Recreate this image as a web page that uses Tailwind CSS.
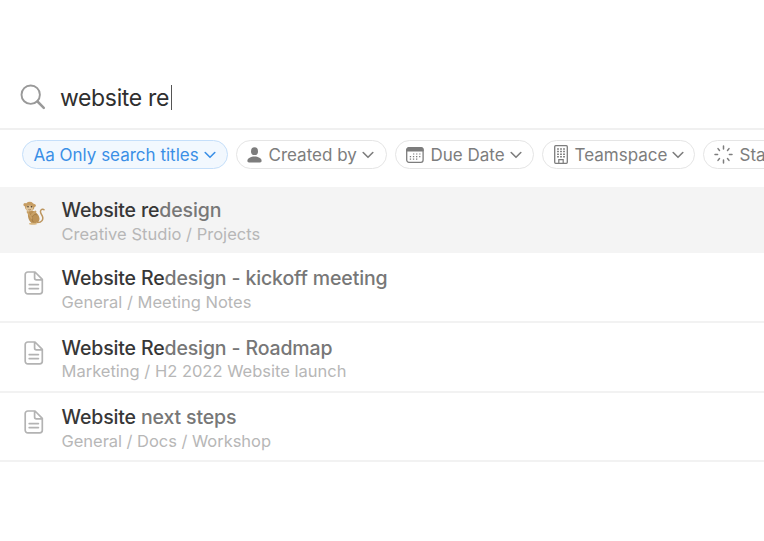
<!DOCTYPE html>
<html lang="en">
<head>
    <meta charset="UTF-8">
    <meta name="viewport" content="width=device-width, initial-scale=1.0">
    <title>Search</title>
    <script src="https://cdn.jsdelivr.net/npm/@tailwindcss/browser@4"></script>
</head>
<body class="h-screen overflow-hidden bg-white pt-[66px] font-['Inter',sans-serif] text-[#777]">
    <!-- Shared icons -->
    <svg class="hidden">
        <symbol id="chevron" viewBox="0 0 12 8">
            <path d="M1.2 1.5 6 6.3l4.8-4.8" fill="none" stroke="currentColor" stroke-width="1.6" stroke-linecap="round" stroke-linejoin="round"/>
        </symbol>
        <symbol id="page" viewBox="0 0 20 24">
            <path d="M3.8 1H11l7.3 7.3v11.9a2.6 2.6 0 0 1-2.6 2.6H3.8a2.6 2.6 0 0 1-2.6-2.6V3.6A2.6 2.6 0 0 1 3.8 1ZM10.6 1.2v5.9a1.8 1.8 0 0 0 1.8 1.8h5.7M5.2 13.6h9.2M5.2 17.6h9.2" fill="none" stroke="currentColor" stroke-width="1.7" stroke-linecap="round" stroke-linejoin="round"/>
        </symbol>
    </svg>

    <!-- Search field -->
    <div class="flex h-[63.5px] items-center border-b-2 border-[#f0f0f0] pl-5">
        <svg class="size-[26px] text-[#999]" viewBox="0 0 26 26" fill="none" stroke="currentColor">
            <circle cx="10.7" cy="10.7" r="9.2" stroke-width="1.9"/>
            <path d="m17.5 17.5 6.3 6.3" stroke-width="2.5" stroke-linecap="round"/>
        </svg>
        <span class="mt-0.5 ml-3.5 text-[23px] tracking-[-0.35px] whitespace-nowrap text-[#2f2f2f]">website re</span>
        <span class="mt-0.5 ml-[2px] h-[25px] w-px bg-[#555]"></span>
    </div>

    <!-- Filters -->
    <div class="flex h-[57.5px] items-start gap-2 overflow-hidden pt-[10px] pl-[21.5px] text-[17px] whitespace-nowrap text-[#7d7d7d]">
        <div class="flex h-[29px] w-[206px] shrink-0 items-center rounded-full border-[1.5px] border-[#c5dffa] bg-[#f2f8fe] pl-[11px] text-[#3a8fe6]">
            <span class="pt-[3px]">Aa Only search titles</span>
            <svg class="mt-0.5 ml-[5px] h-2 w-3"><use href="#chevron"/></svg>
        </div>
        <div class="flex h-[29px] w-[151px] shrink-0 items-center rounded-full border-[1.5px] border-[#e5e5e5] pl-2.5">
            <svg class="mt-px h-4 w-[15px]" viewBox="0 0 15 16" fill="currentColor">
                <ellipse cx="7.5" cy="4.2" rx="3.5" ry="3.9"/>
                <path d="M.4 13.7C.4 11 4 9.4 7.5 9.4s7.1 1.6 7.1 4.3c0 1.2-.5 1.7-1.6 1.7H2C.9 15.4.4 14.9.4 13.7Z"/>
            </svg>
            <span class="ml-[7px] pt-[3px]">Created by</span>
            <svg class="mt-0.5 ml-[5px] h-2 w-3"><use href="#chevron"/></svg>
        </div>
        <div class="flex h-[29px] w-[139px] shrink-0 items-center rounded-full border-[1.5px] border-[#e5e5e5] pl-2.5">
            <svg class="mt-px h-4 w-[18px]" viewBox="0 0 18 16" fill="none" stroke="currentColor">
                <rect x=".7" y=".7" width="16.4" height="14.6" rx="2.2" stroke-width="1.3"/>
                <path d="M.7 2.8A2.1 2.1 0 0 1 2.8.7H15a2.1 2.1 0 0 1 2.1 2.1V4H.7Z" fill="currentColor"/>
                <path d="M7 7h7.5M3.8 9.6h10.7M3.8 12.2h7.7" stroke-width="1.2" stroke-dasharray="1.3 1.8"/>
            </svg>
            <span class="ml-[7px] pt-[3px]">Due Date</span>
            <svg class="mt-0.5 ml-[5px] h-2 w-3"><use href="#chevron"/></svg>
        </div>
        <div class="flex h-[29px] w-[153px] shrink-0 items-center rounded-full border-[1.5px] border-[#e5e5e5] pl-[11px]">
            <svg class="h-[19px] w-3.5" viewBox="0 0 14 19" fill="none" stroke="currentColor">
                <path d="M1.7.7h10.6q1 0 1 1v15.6q0 1-1 1H1.7q-1 0-1-1V1.7q0-1 1-1Z" stroke-width="1.3"/>
                <path d="M3.1 4h8M3.1 6.6h8M3.1 9.2h8M3.1 11.8h8" stroke-width="1.5" stroke-dasharray="1.8 1.2"/>
                <path d="M4.8 18v-3.3h4.4V18" stroke-width="1.2"/>
            </svg>
            <span class="ml-[7px] pt-[3px]">Teamspace</span>
            <svg class="mt-0.5 ml-[5px] h-2 w-3"><use href="#chevron"/></svg>
        </div>
        <div class="flex h-[29px] w-[120px] shrink-0 items-center rounded-full border-[1.5px] border-[#e5e5e5] pl-2.5">
            <svg class="size-[19px]" viewBox="0 0 19 19" fill="none" stroke="currentColor" stroke-width="1.5" stroke-linecap="round">
                <path d="M9.5 1v3M9.5 15v3M1 9.5h2.6M15.400 9.5H18M4 3.6l1.500 1.900M15 3.6l-1.500 1.900M4 15.400l1.500-1.900M15 15.400l-1.500-1.900"/>
            </svg>
            <span class="ml-[7px] pt-[3px]">Status</span>
        </div>
    </div>

    <!-- Results -->
    <div class="whitespace-nowrap">
        <div class="flex h-[66px] bg-[#f4f4f4] pt-[11px]">
            <!-- Monkey -->
            <svg class="mt-[3px] ml-[23px] h-[25px] w-[22px] shrink-0" viewBox="0 0 22 25">
                <path d="M14.5 21.5c4.5 0 6-3 5-6-1-2.300-2.800-4-1.800-6 .8-1.400 2.500-1.700 3.300-.8" fill="none" stroke="#bd965f" stroke-width="1.5" stroke-linecap="round"/>
                <path d="M5.500 10c4-1.700 10.500 2.300 11 7.500.4 4-4 5.500-8 4.500-2.500-2-4.700-6.800-3-12Z" fill="#bc9256"/>
                <path d="M14 14c-3-1.5-5 1-4.5 3.2L7 12.5M9.500 17c-.5 2 0 4 2 5" fill="none" stroke="#a17a45" stroke-width=".8"/>
                <path d="m4.5 11 4.2 6M12.500 10.500 8.800 14" stroke="#c9a166" stroke-width="1.8" stroke-linecap="round"/>
                <ellipse cx="10" cy="22.800" rx="4" ry="1" fill="#d8b782"/>
                <circle cx="2" cy="3.7" r="1.6" fill="#c59b61"/>
                <circle cx="11.3" cy="4.5" r="1.5" fill="#c59b61"/>
                <ellipse cx="6.7" cy="5.6" rx="4.8" ry="4.9" fill="#c69d63"/>
                <ellipse cx="6.5" cy="7.3" rx="3.5" ry="2.9" fill="#dfc49a"/>
                <circle cx="5" cy="5.8" r=".8" fill="#45382a"/>
                <circle cx="8.5" cy="5.8" r=".8" fill="#45382a"/>
                <path d="M5.5 8.5q1.2.8 2.4 0" fill="none" stroke="#8d6640" stroke-width=".7"/>
            </svg>
            <div class="ml-[16.5px]">
                <div class="text-[19.5px] leading-6 font-medium tracking-[-0.14px]"><span class="text-[#373737]">Website re</span>design</div>
                <div class="text-[16.5px] leading-6 tracking-[0.03px] text-[#b7b7b7]">Creative Studio / Projects</div>
            </div>
        </div>
        <div class="flex h-[69.5px] border-b-2 border-[#f2f2f2] pt-[13px]">
            <svg class="mt-[5px] ml-6 h-6 w-5 shrink-0 text-[#b3b3b3]"><use href="#page"/></svg>
            <div class="ml-[17.5px]">
                <div class="text-[19.5px] leading-6 font-medium tracking-[-0.14px]"><span class="text-[#373737]">Website Re</span>design - kickoff meeting</div>
                <div class="text-[16.5px] leading-6 text-[#b7b7b7]">General / Meeting Notes</div>
            </div>
        </div>
        <div class="flex h-[70px] border-b-2 border-[#f2f2f2] pt-[13px]">
            <svg class="mt-[5px] ml-6 h-6 w-5 shrink-0 text-[#b3b3b3]"><use href="#page"/></svg>
            <div class="ml-[17.5px]">
                <div class="text-[19.5px] leading-6 font-medium tracking-[-0.14px]"><span class="text-[#373737]">Website Re</span>design - Roadmap</div>
                <div class="text-[16.5px] leading-[23px] text-[#b7b7b7]">Marketing / H2 2022 Website launch</div>
            </div>
        </div>
        <div class="flex h-[69.5px] border-b-2 border-[#f2f2f2] pt-3">
            <svg class="mt-[5px] ml-6 h-6 w-5 shrink-0 text-[#b3b3b3]"><use href="#page"/></svg>
            <div class="ml-[17.5px]">
                <div class="text-[19.5px] leading-6 font-medium tracking-[-0.14px]"><span class="text-[#373737]">Website</span> next steps</div>
                <div class="text-[16.5px] leading-6 tracking-[-0.04px] text-[#b7b7b7]">General / Docs / Workshop</div>
            </div>
        </div>
    </div>
</body>
</html>
